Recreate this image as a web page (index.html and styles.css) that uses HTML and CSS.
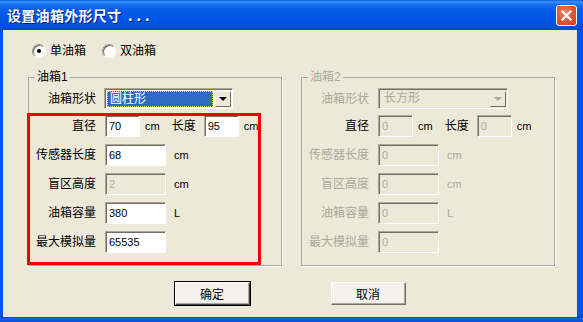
FILE: index.html
```html
<!DOCTYPE html>
<html>
<head>
  <title>设置油箱外形尺寸</title>
  <link rel="stylesheet" href="styles.css">
</head>
<body>
  <div class="window">
    <div class="titlebar">
      <span class="title">设置油箱外形尺寸 <span class="dots">...</span></span>
      <span class="close-btn">
        <svg width="19" height="19" viewBox="0 0 19 19"><path d="M5.5 5.5 L13.5 13.5 M13.5 5.5 L5.5 13.5" stroke="#fff" stroke-width="2.2" stroke-linecap="square"/></svg>
      </span>
    </div>

    <div class="client">
      <div class="radios">
        <label class="radio"><span class="radio-box"><span class="radio-dot"></span></span>单油箱</label>
        <label class="radio"><span class="radio-box"></span>双油箱</label>
      </div>

      <div class="groups">
        <fieldset class="group">
          <legend>油箱1</legend>
          <div class="row combo-row">
            <span class="lbl">油箱形状</span>
            <div class="combo">
              <span class="combo-text"><span class="combo-sel">圆柱形</span></span>
              <span class="combo-btn"><span class="arrow"></span></span>
            </div>
          </div>
          <div class="row">
            <span class="lbl">直径</span>
            <input class="field small" type="text" value="70">
            <span class="unit-s">cm</span>
            <span class="lbl-mid">长度</span>
            <input class="field small" type="text" value="95">
            <span class="unit-s">cm</span>
          </div>
          <div class="row">
            <span class="lbl">传感器长度</span>
            <input class="field" type="text" value="68">
            <span class="unit">cm</span>
          </div>
          <div class="row">
            <span class="lbl">盲区高度</span>
            <input class="field" type="text" value="2" disabled>
            <span class="unit">cm</span>
          </div>
          <div class="row">
            <span class="lbl">油箱容量</span>
            <input class="field" type="text" value="380">
            <span class="unit">L</span>
          </div>
          <div class="row">
            <span class="lbl">最大模拟量</span>
            <input class="field" type="text" value="65535">
          </div>
        </fieldset>

        <fieldset class="group off">
          <legend>油箱2</legend>
          <div class="row combo-row">
            <span class="lbl">油箱形状</span>
            <div class="combo combo-off">
              <span class="combo-text">长方形</span>
              <span class="combo-btn"><span class="arrow"></span></span>
            </div>
          </div>
          <div class="row on">
            <span class="lbl">直径</span>
            <input class="field small" type="text" value="0" disabled>
            <span class="unit-s">cm</span>
            <span class="lbl-mid">长度</span>
            <input class="field small" type="text" value="0" disabled>
            <span class="unit-s">cm</span>
          </div>
          <div class="row">
            <span class="lbl">传感器长度</span>
            <input class="field" type="text" value="0" disabled>
            <span class="unit">cm</span>
          </div>
          <div class="row">
            <span class="lbl">盲区高度</span>
            <input class="field" type="text" value="0" disabled>
            <span class="unit">cm</span>
          </div>
          <div class="row">
            <span class="lbl">油箱容量</span>
            <input class="field" type="text" value="0" disabled>
            <span class="unit">L</span>
          </div>
          <div class="row">
            <span class="lbl">最大模拟量</span>
            <input class="field" type="text" value="0" disabled>
          </div>
        </fieldset>
      </div>

      <div class="buttons">
        <button class="btn default" type="button">确定</button>
        <button class="btn" type="button">取消</button>
      </div>
    </div>

    <!-- red annotation box -->
    <div class="mark"></div>
  </div>
</body>
</html>
```

FILE: styles.css
```css
body {
  margin: 0;
  background-color: #ece9d8;
  font-family: "Liberation Sans", "Noto Sans CJK SC", sans-serif;
  font-size: 12px;
  color: #000000;
}

.window {
  position: relative;
  width: 583px;
  height: 322px;
  display: flex;
  flex-direction: column;
  background: linear-gradient(to bottom, #0055e5 0, #0055e5 316px, #0834b8 317px, #1a63e8 318px, #0a4fd6 322px);
}

.titlebar {
  height: 30px;
  display: flex;
  justify-content: space-between;
  align-items: center;
  padding: 0 6px 0 7px;
  box-sizing: border-box;
  background: linear-gradient(to bottom, #0a5fe4 0, #3d92f7 2px, #1a72f2 4px, #0a5de9 9px, #0055e5 20px, #0050dd 27px, #0044c4 30px);
}

.title {
  color: #ffffff;
  font-family: "Noto Sans CJK SC", sans-serif;
  font-weight: bold;
  font-size: 14px;
  line-height: 16px;
  text-shadow: 1px 1px 0 #0a1a80;
  letter-spacing: 0.3px;
}

.title .dots {
  letter-spacing: 4px;
  margin-left: 3px;
}

.close-btn {
  width: 19px;
  height: 19px;
  border: 1px solid #ffffff;
  border-radius: 3px;
  display: flex;
  background: radial-gradient(circle at 40% 35%, #ee8a6c 0, #e0593a 45%, #c8401e 100%);
}

.client {
  flex: 1;
  margin: 0 6px 5px 3px;
  background-color: #ece9d8;
  display: flex;
  flex-direction: column;
}

/* radio buttons */
.radios {
  display: flex;
  align-items: center;
  height: 16px;
  margin-top: 13px;
  padding-left: 29px;
}

.radio {
  display: flex;
  align-items: center;
  line-height: 16px;
  margin-right: 16px;
}

.radio-box {
  width: 12px;
  height: 12px;
  border-radius: 50%;
  border: 1px solid;
  border-color: #9a9888 #ffffff #ffffff #9a9888;
  box-shadow: inset 1px 1px 0 #716f64;
  background-color: #ffffff;
  display: flex;
  justify-content: center;
  align-items: center;
  margin-right: 4px;
}

.radio-dot {
  width: 4px;
  height: 4px;
  border-radius: 50%;
  background-color: #000000;
}

/* group boxes */
.groups {
  display: flex;
  gap: 19px;
  margin-top: 11px;
  padding-left: 25px;
}

.group {
  width: 254px;
  margin: 0;
  padding: 4px 0 12px 0;
  min-width: 0;
  box-sizing: border-box;
  border: 1px solid #aca899;
  box-shadow: 1px 1px 0 #ffffff;
}

.group legend {
  padding: 0 2px;
  margin-left: 6px;
  line-height: 14px;
}

.off legend,
.off .lbl,
.off .unit {
  color: #aca899;
}

.off .on .lbl {
  color: #000000;
}

.row {
  display: flex;
  align-items: center;
  height: 22px;
  margin-bottom: 7px;
}

.row:last-child {
  margin-bottom: 0;
}

.combo-row {
  height: 21px;
  margin-bottom: 6px;
}

.lbl {
  width: 67px;
  text-align: right;
  margin-right: 9px;
  line-height: 14px;
  white-space: nowrap;
}

.lbl-mid {
  margin-left: 12px;
  margin-right: 8px;
  line-height: 14px;
}

.unit,
.unit-s {
  font-size: 11px;
  line-height: 14px;
}

.unit {
  margin-left: 8px;
}

.unit-s {
  margin-left: 5px;
}

/* text fields */
.field {
  width: 61px;
  height: 22px;
  box-sizing: border-box;
  margin: 0;
  padding: 0 3px;
  border: 1px solid;
  border-color: #aca899 #ffffff #ffffff #aca899;
  box-shadow: inset 1px 1px 0 #716f64;
  background-color: #ffffff;
  font-family: "Liberation Sans", "Noto Sans CJK SC", sans-serif;
  font-size: 11px;
  color: #000000;
  outline: none;
}

.field.small {
  width: 35px;
}

.field:disabled {
  background-color: #ece9d8;
  color: #aca899;
}

/* combo box */
.combo {
  width: 129px;
  height: 21px;
  box-sizing: border-box;
  border: 1px solid;
  border-color: #aca899 #ffffff #ffffff #aca899;
  box-shadow: inset 1px 1px 0 #716f64;
  background-color: #ffffff;
  display: flex;
  padding: 2px 1px 1px 2px;
  margin-left: -1px;
}

.combo-text {
  flex: 1;
  display: flex;
  padding-right: 2px;
  line-height: 14px;
}

.combo-sel {
  flex: 1;
  background-color: #316ac5;
  color: #ffffff;
  border: 1px dotted #e8d06a;
  padding-left: 2px;
}

.combo-btn {
  width: 16px;
  box-sizing: border-box;
  border: 1px solid;
  border-color: #f1efe2 #716f64 #716f64 #f1efe2;
  background-color: #ece9d8;
  display: flex;
  justify-content: center;
  align-items: center;
}

.arrow {
  width: 0;
  height: 0;
  border-left: 4px solid transparent;
  border-right: 4px solid transparent;
  border-top: 4px solid #000000;
}

.combo-off {
  width: 130px;
  background-color: #ece9d8;
  margin-left: 0;
}

.combo-off .combo-text {
  color: #aca899;
  padding-left: 3px;
}

.combo-off .arrow {
  border-top-color: #aca899;
}

/* buttons */
.buttons {
  display: flex;
  justify-content: center;
  gap: 81px;
  margin-top: 16px;
}

.btn {
  width: 75px;
  height: 23px;
  box-sizing: border-box;
  border: 1px solid;
  border-color: #ffffff #716f64 #716f64 #ffffff;
  box-shadow: inset -1px -1px 0 #aca899;
  background-color: #f3f2ec;
  font-family: "Noto Sans CJK SC", sans-serif;
  font-size: 12px;
  padding: 0;
}

.btn.default {
  outline: 1px solid #000000;
  outline-offset: 0;
  border-color: #ffffff #404040 #404040 #ffffff;
}

.mark {
  position: absolute;
  left: 27px;
  top: 113px;
  width: 234px;
  height: 152px;
  box-sizing: border-box;
  border: 3px solid #f00000;
}
```
